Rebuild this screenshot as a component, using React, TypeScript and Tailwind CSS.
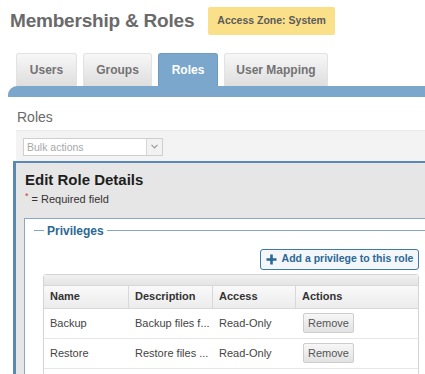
import React from 'react';

const tabs = [
  { label: 'Users', w: 'w-[61px]', active: false },
  { label: 'Groups', w: 'w-[69px]', active: false },
  { label: 'Roles', w: 'w-[60px]', active: true },
  { label: 'User Mapping', w: 'w-[104px]', active: false },
];

const privileges = [
  { name: 'Backup', desc: 'Backup files f...', access: 'Read-Only' },
  { name: 'Restore', desc: 'Restore files ...', access: 'Read-Only' },
];

const cols = 'grid grid-cols-[85px_84px_83px_1fr]';

export default function App() {
  return (
    <div className="w-[425px] h-[374px] overflow-hidden bg-white font-['Liberation_Sans',Arial,sans-serif]">
      <div className="flex items-center pl-[10px] pt-[7px] gap-[14px]">
        <h1 className="text-[19px] font-bold text-[#6a6a6a] tracking-[-0.2px]">Membership &amp; Roles</h1>
        <span className="h-[28px] px-[9px] flex items-center rounded-[2px] bg-[#fbe08a] text-[10.5px] font-bold text-[#5a5a5a]">
          Access Zone: System
        </span>
      </div>

      <div className="flex pl-[16px] gap-[6px] mt-[17px]">
        {tabs.map((t) => (
          <div
            key={t.label}
            className={`${t.w} h-[33px] flex items-center justify-center rounded-t-[3px] text-[12px] font-bold ${
              t.active
                ? 'bg-[#7aa7cb] text-white border border-[#6f9cc0] border-b-0'
                : 'bg-gradient-to-b from-[#f7f7f7] to-[#dedede] text-[#737373] border border-[#e2e2e2] border-b-0'
            }`}
          >
            {t.label}
          </div>
        ))}
      </div>
      <div className="ml-[8px] h-[11px] bg-[#7aa7cb] rounded-tl-[9px]" />

      <div className="pl-[17px] pt-[11px] text-[14px] leading-[18px] text-[#6a6a6a] font-medium">Roles</div>

      <div className="ml-[16px] mt-[4px] h-[31px] bg-[#f3f3f3] border-t border-[#e9e9e9] pl-[7px] pt-[7px]">
        <div className="flex w-[140px] h-[18px] border border-[#cfcfcf] bg-white">
          <div className="flex-1 pl-[3px] text-[10.5px] leading-[16px] text-[#a8a8a8]">Bulk actions</div>
          <div className="w-[16px] border-l border-[#d6d6d6] bg-[#f2f2f2] flex items-center justify-center">
            <svg width="7" height="5" viewBox="0 0 7 5">
              <path d="M0.5 0.8 L3.5 3.8 L6.5 0.8" fill="none" stroke="#9a9a9a" strokeWidth="1.2" />
            </svg>
          </div>
        </div>
      </div>

      <div className="ml-[13px] h-[220px] border-l-[3px] border-t-2 border-[#5a88b3] bg-[#e6e6e6] pl-[8px] pt-[8px]">
        <h2 className="pl-[1px] text-[15px] leading-[18px] font-bold text-[#1e1e1e]">Edit Role Details</h2>
        <div className="pl-[1px] mt-[3px] text-[11px] leading-[14px] text-[#333] flex items-start">
          <span className="text-[#d23c3c] text-[9px] leading-[9px] mr-[3px]">*</span>= Required field
        </div>

        <div className="mt-[12px] h-[200px] border border-r-0 border-[#87a9c9] bg-white pt-[5px]">
          <div className="flex items-center h-[14px]">
            <div className="w-[10px] ml-[9px] h-px bg-[#86a8c7]" />
            <span className="px-[3px] text-[12px] font-bold text-[#2c6894]">Privileges</span>
            <div className="flex-1 h-px bg-[#86a8c7]" />
          </div>

          <div className="flex justify-end pr-[6px] mt-[11px]">
            <button className="h-[21px] w-[159px] whitespace-nowrap flex items-center justify-center gap-[5px] rounded-[3px] border border-[#3f7aa6] bg-[#f3f7fa] text-[10.5px] font-bold text-[#2c6894]">
              <svg width="11" height="11" viewBox="0 0 11 11">
                <path d="M5.5 0.5 V10.5 M0.5 5.5 H10.5" stroke="#2c6894" strokeWidth="2.6" />
              </svg>
              Add a privilege to this role
            </button>
          </div>

          <div className="ml-[18px] mr-[6px] mt-[4px] border border-[#d4d4d4] rounded-t-[3px] text-[11px]">
            <div className="h-[11px] bg-gradient-to-b from-[#f1f1f1] to-[#e4e4e4] border-b border-[#d8d8d8]" />
            <div className={`${cols} h-[23px] bg-gradient-to-b from-[#f9f9f9] to-[#ececec] border-b border-[#d8d8d8] font-bold text-[#333]`}>
              {['Name', 'Description', 'Access', 'Actions'].map((h, i) => (
                <div key={h} className={`flex items-center pl-[6px] ${i < 3 ? 'border-r border-[#d8d8d8]' : ''}`}>
                  {h}
                </div>
              ))}
            </div>
            {privileges.map((p) => (
              <div key={p.name} className={`${cols} h-[30px] border-b border-[#e6e6e6] text-[#444]`}>
                <div className="flex items-center pl-[6px]">{p.name}</div>
                <div className="flex items-center pl-[6px]">{p.desc}</div>
                <div className="flex items-center pl-[6px]">{p.access}</div>
                <div className="flex items-center pl-[7px]">
                  <button className="w-[51px] h-[20px] rounded-[2px] border border-[#cdcdcd] bg-gradient-to-b from-[#f7f7f7] to-[#e2e2e2] text-[11px] text-[#555]">
                    Remove
                  </button>
                </div>
              </div>
            ))}
            <div className="h-[30px]" />
          </div>
        </div>
      </div>
    </div>
  );
}
